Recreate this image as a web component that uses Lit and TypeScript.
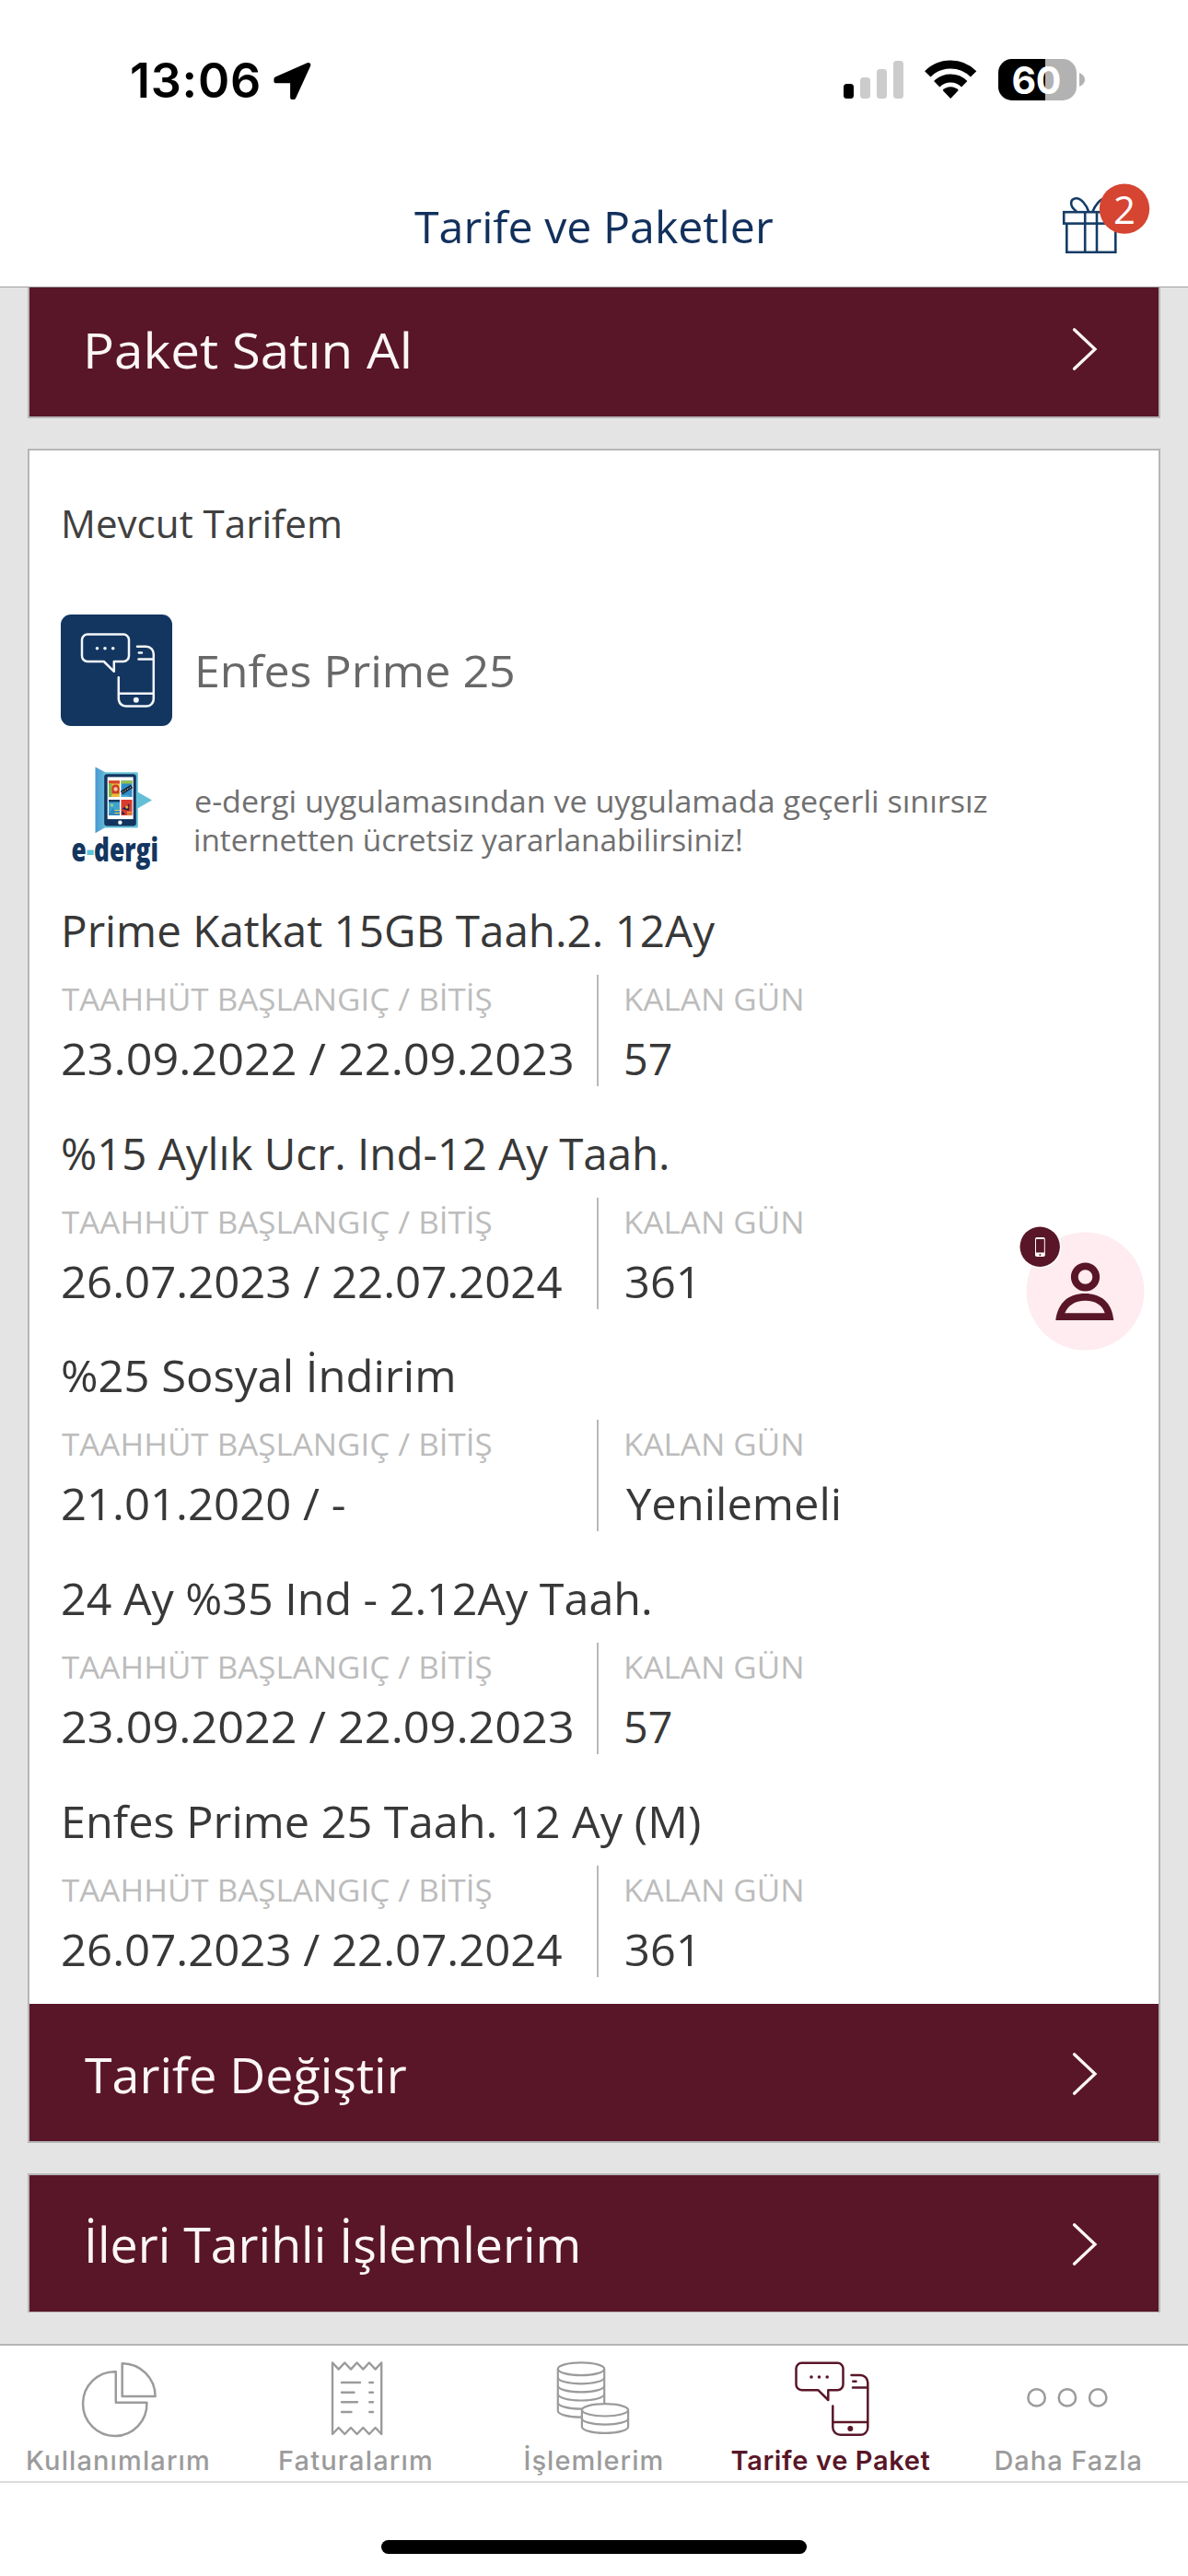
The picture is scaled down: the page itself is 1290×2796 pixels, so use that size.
import { LitElement, html, css, svg } from 'lit';
import { customElement, property } from 'lit/decorators.js';
import { classMap } from 'lit/directives/class-map.js';

/**
 * One line of text whose ink spans `ink` pixels, reached by widening the glyphs
 * (mode "stretch") or by tracking (mode "track").
 */
@customElement('fitted-text')
class FittedText extends LitElement {
  @property() text = '';
  @property() mode: 'stretch' | 'track' = 'stretch';
  @property({ type: Number }) ink = 0;

  static styles = css`
    :host { display: block; white-space: pre; flex: none; }
    .line { display: block; width: max-content; white-space: pre; transform-origin: 0 50%; }
  `;

  private fit() {
    const style = getComputedStyle(this);
    const ctx = document.createElement('canvas').getContext('2d')!;
    ctx.font = `${style.fontWeight} ${style.fontSize} ${style.fontFamily}`;
    const m = ctx.measureText(this.text);
    const left = m.actualBoundingBoxLeft;
    const width = left + m.actualBoundingBoxRight;
    if (this.mode === 'track') {
      const spacing = (this.ink - width) / Math.max(1, this.text.length - 1);
      return `letter-spacing:${spacing.toFixed(3)}px;margin-left:${left.toFixed(2)}px`;
    }
    const scale = this.ink / width;
    return `transform:scaleX(${scale.toFixed(4)});margin-left:${(left * scale).toFixed(2)}px`;
  }

  render() {
    const fitted = this.fit();
    this.style.width = `${this.ink}px`;
    return html`<span class="line" style=${fitted}>${this.text}</span>`;
  }
}

const chatPhone = svg`
  <g fill="none" stroke="currentColor" stroke-width="2.5" stroke-linecap="round" stroke-linejoin="round">
    <path d="M870.5 2564.8H909.5A6 6 0 0 1 915.5 2570.8V2588A6 6 0 0 1 909.5 2594.2H899.3V2605L888.3 2594.2H870.5A6 6 0 0 1 864.5 2588.2V2570.8A6 6 0 0 1 870.5 2564.8Z"/>
    <path d="M924.5 2578H934.3A8 8 0 0 1 942.3 2586V2635A8 8 0 0 1 934.3 2642.8H912.3A8 8 0 0 1 904.3 2634.8V2611.5"/>
    <path d="M926 2591.6H942M926.3 2584.8H929.5M904.5 2629H942"/>
  </g>
  <g fill="currentColor">
    <circle cx="881" cy="2580" r="1.8"/><circle cx="889.5" cy="2580" r="1.8"/><circle cx="898.2" cy="2580" r="1.8"/>
    <circle cx="923.3" cy="2635.9" r="3"/>
  </g>`;

const icons: Record<string, unknown> = {
  usage: svg`<g fill="none" stroke="currentColor" stroke-width="2.5" stroke-linejoin="round">
    <path d="M125.8 2574.2V2607.7H159.4A34.7 34.9 0 1 1 125.8 2574.2Z"/>
    <path d="M132.7 2565.2A36 36 0 0 1 168.6 2601H132.7Z"/></g>`,
  bills: svg`<g fill="none" stroke="currentColor" stroke-width="2.4" stroke-linecap="round" stroke-linejoin="round">
    <path d="M361 2564.5L367.7 2571.6L374.3 2564.5L381 2571.6L387.6 2564.5L394.3 2571.6L400.9 2564.5L407.6 2571.6L414.2 2564.5V2642L407.6 2635L400.9 2642L394.3 2635L387.6 2642L381 2635L374.3 2642L367.7 2635L361 2642Z"/>
    <path d="M371 2586H391M371 2596.7H384.5M371 2607.3H388M371 2618H381.5M401.3 2586H405M401.3 2596.7H405M401.3 2607.3H405M401.3 2618H405"/></g>`,
  coins: svg`<g fill="none" stroke="currentColor" stroke-width="2.2">
    <ellipse cx="631" cy="2571.3" rx="25.2" ry="6.9"/>
    <path d="M605.8 2571.3V2616.8A25.2 6.9 0 0 0 656.2 2616.8V2571.3"/>
    <path d="M605.8 2580.4A25.2 6.9 0 0 0 656.2 2580.4M605.8 2589.5A25.2 6.9 0 0 0 656.2 2589.5M605.8 2598.6A25.2 6.9 0 0 0 656.2 2598.6M605.8 2607.7A25.2 6.9 0 0 0 656.2 2607.7"/>
    <path fill="#fff" d="M631.9 2615.8A25.1 6.7 0 0 1 682.1 2615.8V2634A25.1 6.9 0 0 1 631.9 2634Z"/>
    <path d="M631.9 2615.8A25.1 6.7 0 0 0 682.1 2615.8M631.9 2624.9A25.1 6.7 0 0 0 682.1 2624.9"/></g>`,
  tariff: chatPhone,
  more: svg`<g fill="none" stroke="currentColor" stroke-width="2.5">
    <circle cx="1125.6" cy="2602.4" r="9.2"/><circle cx="1158.9" cy="2602.4" r="9.2"/><circle cx="1192.2" cy="2602.4" r="9.2"/></g>`,
};

const sans = css`"Open Sans", "Noto Sans", sans-serif`;

@customElement('status-bar')
class StatusBar extends LitElement {
  static styles = css`
    :host { display: flex; align-items: center; height: 176px; padding: 0 112px 0 143px; box-sizing: border-box; color: #000; }
    .time { font: 600 52px/176px Inter, sans-serif; }
    .arrow { margin-left: 13px; }
    .system { margin-left: auto; display: flex; gap: 23px; }
    .signal { margin-right: -1px; }
    svg { display: block; overflow: visible; }
    .level { font: 700 41px Inter, sans-serif; fill: #fff; }
  `;
  render() {
    return html`
      <fitted-text class="time" text="13:06" ink="138" mode="track"></fitted-text>
      <svg class="arrow" width="44" height="48" viewBox="294 64 44 48">
        <path d="M334.7 70.7L300 86V87.7H317.7V105.4H318.8Z" stroke="#000" stroke-width="5.2" stroke-linejoin="round"/>
      </svg>
      <div class="system">
        <svg class="signal" width="66" height="48" viewBox="916 64 66 48">
          <rect x="916" y="91" width="11" height="16" rx="3.5"/>
          <g fill="#ccc"><rect x="934" y="84" width="11" height="23" rx="3.5"/><rect x="952" y="75" width="11" height="32" rx="3.5"/><rect x="970" y="66" width="11" height="41" rx="3.5"/></g>
        </svg>
        <svg width="57" height="48" viewBox="1004 64 57 48">
          <g fill="none" stroke="#000" stroke-width="9"><path d="M1007.3 80.3A35 35 0 0 1 1057.1 80.3"/><path d="M1017.2 91.2A21.3 21.3 0 0 1 1047.2 91.2"/></g>
          <path d="M1032.2 107L1023.6 98A12 12 0 0 1 1040.8 98Z"/>
        </svg>
        <svg width="94" height="48" viewBox="1084 64 94 48">
          <clipPath id="shell"><rect x="1084" y="64" width="85" height="45" rx="15"/></clipPath>
          <g clip-path="url(#shell)"><rect x="1084" y="64" width="85" height="45" fill="#b2b2b2"/><rect x="1084" y="64" width="51" height="45"/></g>
          <path d="M1172 79C1180 82 1180 91 1172 94Z" fill="#b2b2b2"/>
          <text class="level" x="1098.5" y="101.7" textLength="54">60</text>
        </svg>
      </div>`;
  }
}

@customElement('title-bar')
class TitleBar extends LitElement {
  static styles = css`
    :host { display: grid; grid-template-columns: 450px 1fr auto; align-items: center; height: 136px; padding-right: 40px; box-sizing: border-box; border-bottom: 1px solid #a0a0a0; background: #fff; }
    .title { grid-column: 2; font: 400 48px/137px ${sans}; color: #12305c; padding-top: 1px; }
    svg { display: block; margin-top: -16px; overflow: visible; }
    .count { font: 400 42px ${sans}; fill: #fff; text-anchor: middle; }
  `;
  render() {
    return html`
      <fitted-text class="title" text="Tarife ve Paketler" ink="389"></fitted-text>
      <svg width="96" height="78" viewBox="1154 198 96 78">
        <g fill="none" stroke="#153c66" stroke-width="2.6">
          <rect x="1155.2" y="230.2" width="59" height="12.4"/>
          <path d="M1158.3 242.6V273.8H1211.3V242.6M1178.2 230.2V273.8M1191 230.2V273.8"/>
          <path d="M1182 229.5C1180 223 1174 214.8 1168.3 215.2C1161.5 216 1161 224 1169 229.5M1186.5 229.5C1189 223 1195 214.8 1200.7 215.2C1207.5 216 1208 224 1200 229.5"/>
        </g>
        <circle cx="1221" cy="226.6" r="27.2" fill="#d64531"/>
        <text class="count" x="1221" y="242.5">2</text>
      </svg>`;
  }
}

@customElement('action-row')
class ActionRow extends LitElement {
  @property() label = '';
  @property({ type: Number }) ink = 0;
  @property({ type: Number }) indent = 63;
  static styles = css`
    :host { display: flex; align-items: center; justify-content: space-between; height: 149px; padding: 3px 66px 0 0; box-sizing: border-box; background: #591628; color: #fbf6f7; }
    .label { font: 400 53px/140px ${sans}; padding-top: 1px; }
    svg { display: block; }
  `;
  render() {
    return html`
      <fitted-text class="label" style="margin-left:${this.indent}px" .text=${this.label} .ink=${this.ink}></fitted-text>
      <svg width="28" height="48" viewBox="0 0 28 48"><path d="M2.5 2.8L25 24L2.5 45.2" fill="none" stroke="currentColor" stroke-width="3.3" stroke-linecap="round"/></svg>`;
  }
}

interface Commitment {
  name: string; nameInk: number; nameX: number;
  range: string; rangeInk: number;
  left: string; leftInk: number;
}

@customElement('commitment-row')
class CommitmentRow extends LitElement {
  @property({ attribute: false }) item!: Commitment;
  static styles = css`
    :host { display: block; }
    .name { font: 400 48px/62px ${sans}; color: #383838; }
    .detail { display: grid; grid-template-columns: 582px 1fr; height: 121px; margin-top: 17px; }
    .period { padding-left: 1px; }
    .left { border-left: 2px solid #b8b8b8; padding-left: 30px; }
    .caption { font: 400 32px/53px ${sans}; color: #bcbcbc; }
    .value { font: 400 48px/60px ${sans}; color: #383838; margin-top: 8px; }
    .period .value { margin-left: 1px; }
  `;
  render() {
    const c = this.item;
    return html`
      <fitted-text class="name" style="margin-left:${c.nameX}px" .text=${c.name} .ink=${c.nameInk}></fitted-text>
      <div class="detail">
        <div class="period">
          <fitted-text class="caption" text="TAAHHÜT BAŞLANGIÇ / BİTİŞ" ink="467"></fitted-text>
          <fitted-text class="value" .text=${c.range} .ink=${c.rangeInk}></fitted-text>
        </div>
        <div class="left">
          <fitted-text class="caption" text="KALAN GÜN" ink="190"></fitted-text>
          <fitted-text class="value" .text=${c.left} .ink=${c.leftInk}></fitted-text>
        </div>
      </div>`;
  }
}

@customElement('edergi-logo')
class EdergiLogo extends LitElement {
  static styles = css`
    :host { display: block; }
    svg { display: block; overflow: visible; }
    .word { font: 800 35px ${sans}; fill: #133660; }
    .dash { fill: #5bc4d8; }
  `;
  render() {
    return html`
      <svg width="121" height="130" viewBox="66 824 121 130">
        <defs><linearGradient id="flap"><stop offset="0" stop-color="#4a97d3"/><stop offset="1" stop-color="#62bcd6"/></linearGradient></defs>
        <path d="M103.5 832.5L114.5 838.3V898L103.5 904.3Z" fill="url(#flap)"/>
        <path d="M113 838.2H148.5Q149.8 838.2 149.8 839.5V859.7L165 868.5L149.8 877.3V897Q149.8 898.5 148.5 898.5H113Z" fill="#62bfd6"/>
        <rect x="113.2" y="840.3" width="34.6" height="56.3" rx="3" fill="#12345f"/>
        <rect x="116.7" y="843.4" width="28" height="45.7" fill="#fff"/>
        <rect x="118" y="847.3" width="12" height="17.7" fill="#e8c53a"/><rect x="118" y="847.3" width="12" height="3.2" fill="#d8432f"/>
        <rect x="118" y="850.5" width="3.5" height="14.5" fill="#7db54a"/>
        <circle cx="125.5" cy="855.5" r="4" fill="#cf3b28"/><path d="M121.5 855H129.5V861.5H121.5Z" fill="#cf3b28"/><circle cx="125.6" cy="856.5" r="2.2" fill="#f6c49a"/><path d="M122.5 865Q125.5 859 129 865Z" fill="#f0b33a"/>
        <rect x="131.5" y="847.3" width="12" height="17.7" fill="#2f8fc4"/><rect x="131.5" y="847.3" width="12" height="3.2" fill="#9cc04a"/>
        <path d="M132 860.5L143 853.5" stroke="#14264a" stroke-width="4"/><path d="M133 860L142.5 854" stroke="#f2d24a" stroke-width="1" stroke-dasharray="1.5 1.5"/><path d="M132 864H140" stroke="#63c6dc"/>
        <rect x="118" y="868" width="12" height="17" fill="#3fa3cf"/><rect x="118" y="868" width="12" height="2.5" fill="#173a66"/>
        <circle cx="121.5" cy="874" r="1.5" fill="#a9dc6a"/><path d="M118 884L122.5 877L126 881L128 878.5L130 881V885H118Z" fill="#2f86bd"/><path d="M124.5 879.5H129.5M124.5 882.5H129.5" stroke="#e8d44a" stroke-width="1.2"/>
        <rect x="131.5" y="868" width="12" height="17" fill="#d93a2e"/><path d="M132.5 878L140.5 872.5L140 880Z" fill="#14264a"/><circle cx="137.7" cy="876" r="1.7" fill="#e8a53a"/><path d="M132.5 884V880L136 884Z" fill="#14264a"/><path d="M138 881.5H143M138 883.7H143" stroke="#f0c24a" stroke-width="1.1"/>
        <circle cx="130.4" cy="892.7" r="2.2" fill="#fff"/>
        <text class="word" x="77.5" y="935" textLength="94.5" lengthAdjust="spacingAndGlyphs">e<tspan class="dash">-</tspan>dergi</text>
      </svg>`;
  }
}

@customElement('tab-bar')
class TabBar extends LitElement {
  static styles = css`
    :host { display: grid; grid-template-columns: repeat(5, 1fr); height: 149px; box-sizing: content-box; border-top: 2px solid #b6b6b6; background: #fff; box-shadow: inset 0 -2px #dcdcdc; }
    .tab { display: flex; flex-direction: column; align-items: center; padding-top: 14px; color: #9b9b9b; }
    .tab.active { color: #591628; }
    .label { font: 500 29px/45px Inter, sans-serif; margin-right: 2px; }
    .active .label { font-weight: 600; }
    svg { display: block; }
  `;
  private tabs = [
    { icon: 'usage', x: 79, label: 'Kullanımlarım', ink: 196 },
    { icon: 'bills', x: 337, label: 'Faturalarım', ink: 164 },
    { icon: 'coins', x: 595, label: 'İşlemlerim', ink: 149 },
    { icon: 'tariff', x: 853, label: 'Tarife ve Paket', ink: 215, active: true },
    { icon: 'more', x: 1111, label: 'Daha Fazla', ink: 157 },
  ];
  render() {
    return this.tabs.map(t => html`
      <div class=${classMap({ tab: true, active: !!t.active })}>
        <svg width="100" height="88" viewBox="${t.x} 2560 100 88">${icons[t.icon]}</svg>
        <fitted-text class="label" mode="track" .text=${t.label} .ink=${t.ink}></fitted-text>
      </div>`);
  }
}

@customElement('app-root')
class AppRoot extends LitElement {
  static styles = css`
    :host { display: flex; flex-direction: column; position: relative; width: 1290px; height: 2796px; background: #fff; overflow: hidden; font-family: ${sans}; }
    main { height: 2232px; flex: none; box-sizing: border-box; background: #e4e4e4; padding: 0 30px; overflow: hidden; display: flex; flex-direction: column; gap: 33px; }
    .card { flex: none; border: 2px solid #b6b6b6; background: #fff; }
    .card.first { margin-top: -11px; }
    .card.last { border-bottom-width: 1px; }
    .card.last action-row { height: 148px; padding-top: 1px; }
    .heading { height: 178px; margin-left: 38px; font: 400 42px/158px ${sans}; color: #404040; }
    .plan { display: flex; height: 121px; padding-left: 34px; gap: 28px; }
    .badge { width: 121px; height: 121px; border-radius: 11px; background: #133660; color: #f4f7fb; }
    .badge svg { display: block; }
    .plan-name { font: 500 48px/121px ${sans}; color: #686868; }
    .promo { display: flex; gap: 25px; padding: 36px 0 0 34px; height: 155px; }
    .promo-text { padding-top: 25px; font: 400 33px/41.5px ${sans}; color: #707070; }
    .list { display: flex; flex-direction: column; gap: 41.65px; padding: 0 34px 29.5px; }
    .assistant { position: absolute; left: 1105px; top: 1328px; display: block; }
    .home { flex: 1; display: flex; justify-content: center; padding-top: 62px; }
    .pill { width: 462px; height: 15px; border-radius: 8px; background: #000; }
  `;

  private items: Commitment[] = [
    { name: 'Prime Katkat 15GB Taah.2. 12Ay', nameInk: 707, nameX: 4, range: '23.09.2022 / 22.09.2023', rangeInk: 553, left: '57', leftInk: 49 },
    { name: '%15 Aylık Ucr. Ind-12 Ay Taah.', nameInk: 657, nameX: 2, range: '26.07.2023 / 22.07.2024', rangeInk: 542, left: '361', leftInk: 71 },
    { name: '%25 Sosyal İndirim', nameInk: 424, nameX: 2, range: '21.01.2020 / -', rangeInk: 306, left: 'Yenilemeli', leftInk: 231 },
    { name: '24 Ay %35 Ind - 2.12Ay Taah.', nameInk: 638, nameX: 2, range: '23.09.2022 / 22.09.2023', rangeInk: 553, left: '57', leftInk: 49 },
    { name: 'Enfes Prime 25 Taah. 12 Ay (M)', nameInk: 690, nameX: 4, range: '26.07.2023 / 22.07.2024', rangeInk: 542, left: '361', leftInk: 71 },
  ];

  render() {
    return html`
      <status-bar></status-bar>
      <title-bar></title-bar>
      <main>
        <div class="card first"><action-row label="Paket Satın Al" ink="348" indent="63"></action-row></div>
        <div class="card">
          <fitted-text class="heading" text="Mevcut Tarifem" ink="299"></fitted-text>
          <div class="plan">
            <div class="badge"><svg width="121" height="121" viewBox="841.5 2543.2 121 121">${chatPhone}</svg></div>
            <fitted-text class="plan-name" text="Enfes Prime 25" ink="342"></fitted-text>
          </div>
          <div class="promo">
            <edergi-logo></edergi-logo>
            <div class="promo-text">
              <fitted-text text="e-dergi uygulamasından ve uygulamada geçerli sınırsız" ink="860"></fitted-text>
              <fitted-text text="internetten ücretsiz yararlanabilirsiniz!" ink="593"></fitted-text>
            </div>
          </div>
          <div class="list">${this.items.map(i => html`<commitment-row .item=${i}></commitment-row>`)}</div>
          <action-row label="Tarife Değiştir" ink="349" indent="60"></action-row>
        </div>
        <div class="card last"><action-row label="İleri Tarihli İşlemlerim" ink="532" indent="63"></action-row></div>
      </main>
      <tab-bar></tab-bar>
      <div class="home"><div class="pill"></div></div>
      <svg class="assistant" width="140" height="142" viewBox="1105 1328 140 142">
        <circle cx="1178.5" cy="1401.5" r="64" fill="#feecf0"/>
        <circle cx="1178.5" cy="1386" r="11.7" fill="none" stroke="#591628" stroke-width="7.8"/>
        <path fill="#591628" fill-rule="evenodd" d="M1146.3 1433C1149 1413 1161 1404 1178 1404S1207.5 1413 1209.3 1433ZM1156.3 1425.2H1199.7C1197 1417 1190 1411.8 1178.5 1411.8S1160 1417 1156.3 1425.2Z"/>
        <circle cx="1129.4" cy="1353.6" r="23" fill="#fff"/>
        <circle cx="1129.2" cy="1353.2" r="21.7" fill="#591628"/>
        <rect x="1124" y="1343" width="10.8" height="21" rx="1.8" fill="#fff"/>
        <rect x="1125" y="1345" width="8.8" height="14.5" fill="#591628"/>
        <circle cx="1129.4" cy="1362" r="1" fill="#591628"/>
      </svg>`;
  }
}
